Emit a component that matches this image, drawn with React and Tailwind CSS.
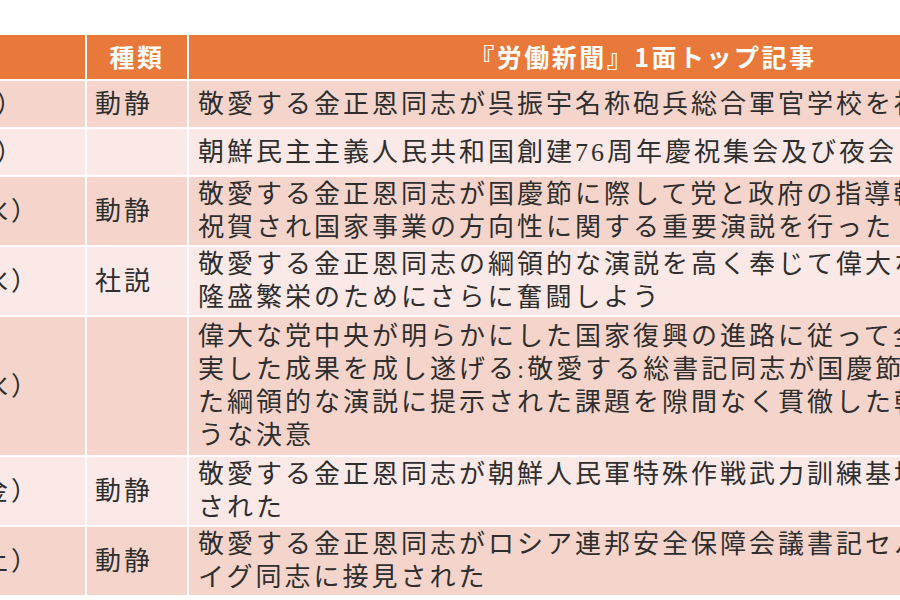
import React from "react";

const rows = [
  { date: "9月8日（日）", pr: "pr-[60px]", kind: "動静", lines: ["敬愛する金正恩同志が呉振宇名称砲兵総合軍官学校を視察された"], dark: true },
  { date: "9月9日（月）", pr: "pr-[60px]", kind: "", lines: ["朝鮮民主主義人民共和国創建76周年慶祝集会及び夜会"], dark: false },
  { date: "9月11日（水）", pr: "pr-[45px]", kind: "動静", lines: ["敬愛する金正恩同志が国慶節に際して党と政府の指導幹部を", "祝賀され国家事業の方向性に関する重要演説を行った"], dark: true },
  { date: "9月11日（水）", pr: "pr-[45px]", kind: "社説", lines: ["敬愛する金正恩同志の綱領的な演説を高く奉じて偉大な祖国の", "隆盛繁栄のためにさらに奮闘しよう"], dark: false },
  { date: "9月11日（水）", pr: "pr-[45px]", kind: "", lines: ["偉大な党中央が明らかにした国家復興の進路に従って全面的に充", "実した成果を成し遂げる:敬愛する総書記同志が国慶節に行っ", "た綱領的な演説に提示された課題を隙間なく貫徹した幹部たちのよ", "うな決意"], dark: true },
  { date: "9月13日（金）", pr: "pr-[45px]", kind: "動静", lines: ["敬愛する金正恩同志が朝鮮人民軍特殊作戦武力訓練基地を視察", "された"], dark: false },
  { date: "9月14日（土）", pr: "pr-[45px]", kind: "動静", lines: ["敬愛する金正恩同志がロシア連邦安全保障会議書記セルゲイ・ショ", "イグ同志に接見された"], dark: true },
];

const cellText =
  "whitespace-nowrap text-[26px] font-normal tracking-[3px] leading-[33px] font-['Liberation_Serif','Noto_Sans_CJK_JP',serif]";
const headText =
  "text-white font-bold text-[25px] tracking-[2.5px] font-['Noto_Sans_CJK_JP',sans-serif]";

export default function App() {
  return (
    <div className="w-[900px] h-[600px] overflow-hidden bg-white pt-[35px]">
      <div className="ml-[-115px] grid grid-cols-[200px_100px_908px] grid-rows-[44px_46px_46px_68px_68px_138px_68px_68px] gap-[2px] text-[#2e2e2e]">
        <div className="bg-[#E8793A]" />
        <div className={`bg-[#E8793A] flex items-center justify-center ${headText}`}>種類</div>
        <div className={`bg-[#E8793A] flex items-center justify-center ${headText}`}>
          『労働新聞』1面トップ記事
        </div>
        {rows.map((r, i) => {
          const bg = r.dark ? "bg-[#F5D5CB]" : "bg-[#FAE9E6]";
          return (
            <React.Fragment key={i}>
              <div className={`${bg} flex items-center justify-end ${r.pr} ${cellText}`}>{r.date}</div>
              <div className={`${bg} flex items-center pl-[8px] ${cellText}`}>{r.kind}</div>
              <div className={`${bg} flex flex-col justify-center pl-[9px] ${cellText}`}>
                {r.lines.map((l, j) => (
                  <div key={j}>{l}</div>
                ))}
              </div>
            </React.Fragment>
          );
        })}
      </div>
    </div>
  );
}
